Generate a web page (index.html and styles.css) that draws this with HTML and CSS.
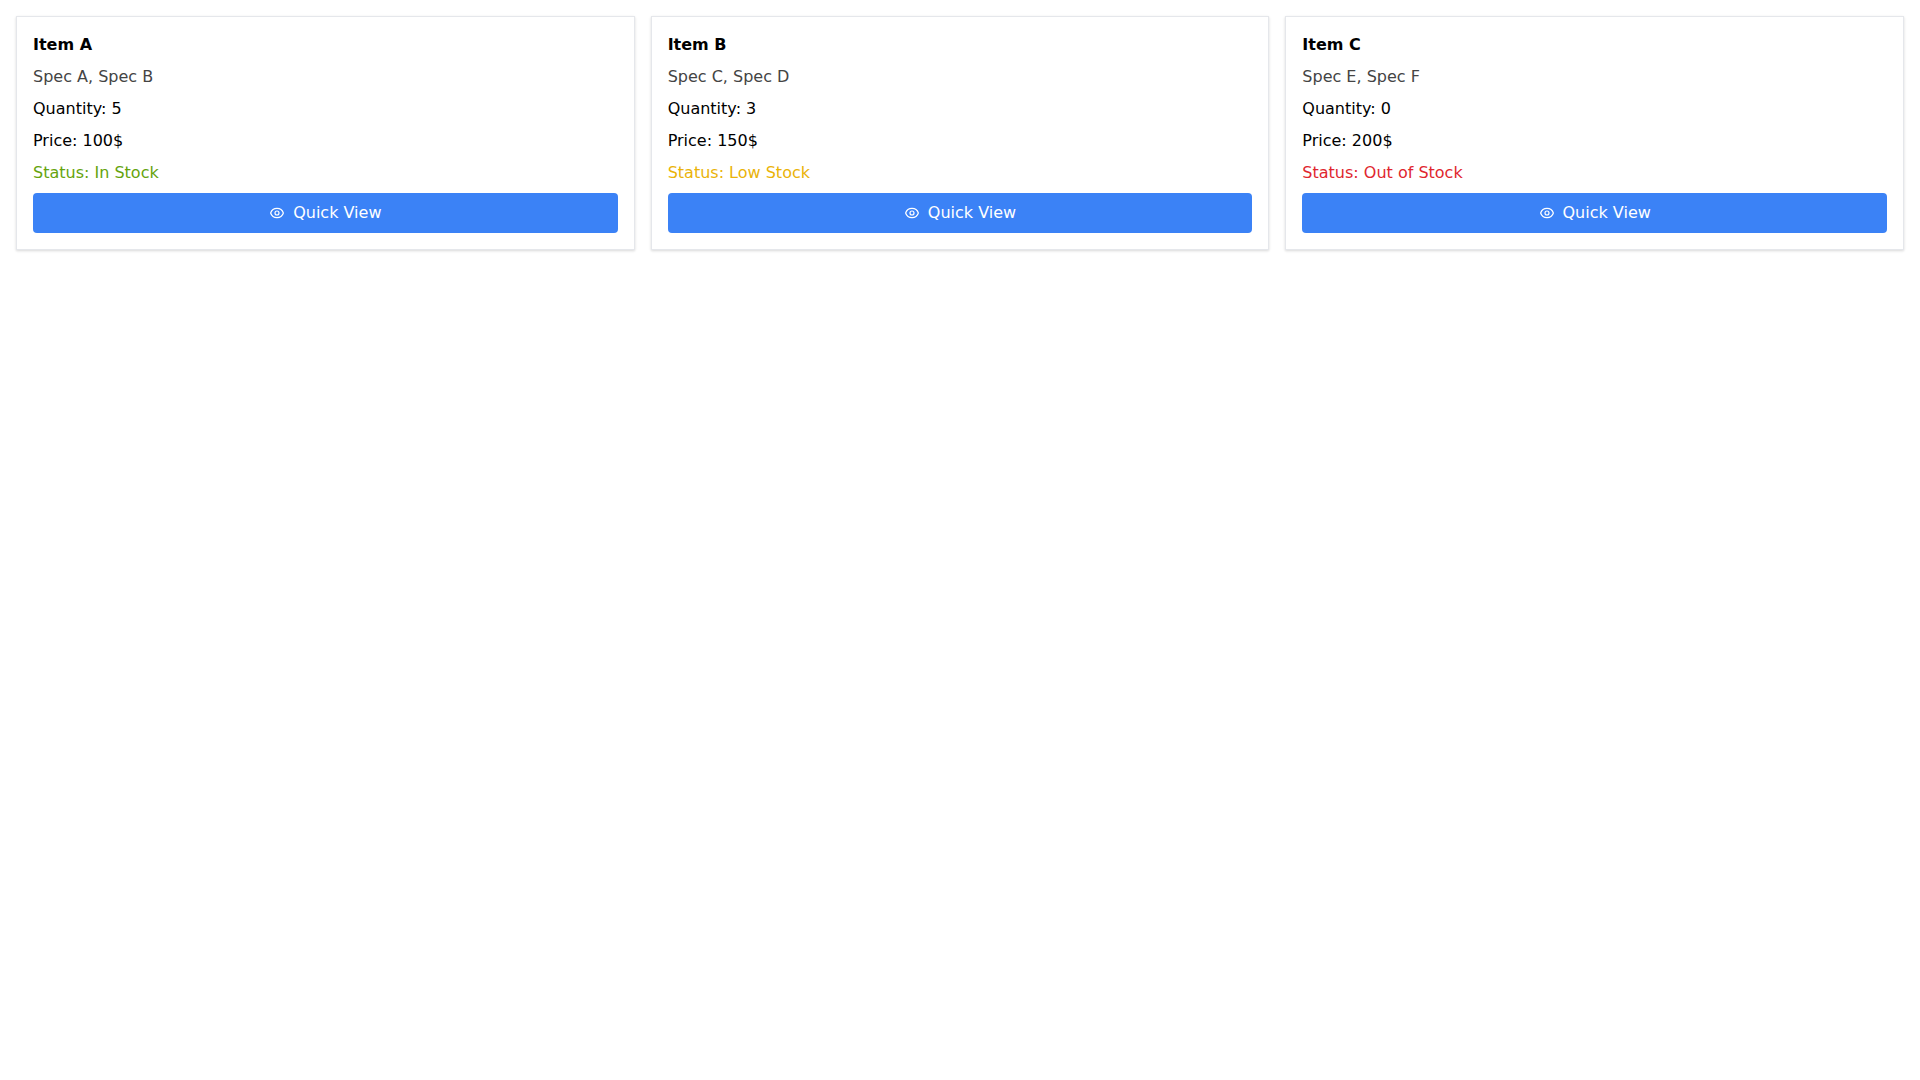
FILE: index.html
```html
<!DOCTYPE html>
<html lang="en">
<head>
    <meta charset="UTF-8">
    <meta name="viewport" content="width=device-width, initial-scale=1.0">
    <title>Items</title>
    <link rel="stylesheet" href="styles.css">
</head>
<body>
    <div class="grid">
        <div class="card">
            <div class="row name">Item A</div>
            <div class="row specs">Spec A, Spec B</div>
            <div class="row">Quantity: 5</div>
            <div class="row">Price: 100$</div>
            <div class="row status in-stock">Status: In Stock</div>
            <button class="quick-view" type="button">
                <svg class="icon" viewBox="0 0 24 24" fill="none" stroke="currentColor" stroke-width="1.8" stroke-linecap="round" stroke-linejoin="round"><path d="M15 12a3 3 0 11-6 0 3 3 0 016 0z"/><path d="M2.458 12C3.732 7.943 7.523 5 12 5c4.478 0 8.268 2.943 9.542 7-1.274 4.057-5.064 7-9.542 7-4.477 0-8.268-2.943-9.542-7z"/></svg>
                Quick View
            </button>
        </div>
        <div class="card">
            <div class="row name">Item B</div>
            <div class="row specs">Spec C, Spec D</div>
            <div class="row">Quantity: 3</div>
            <div class="row">Price: 150$</div>
            <div class="row status low-stock">Status: Low Stock</div>
            <button class="quick-view" type="button">
                <svg class="icon" viewBox="0 0 24 24" fill="none" stroke="currentColor" stroke-width="1.8" stroke-linecap="round" stroke-linejoin="round"><path d="M15 12a3 3 0 11-6 0 3 3 0 016 0z"/><path d="M2.458 12C3.732 7.943 7.523 5 12 5c4.478 0 8.268 2.943 9.542 7-1.274 4.057-5.064 7-9.542 7-4.477 0-8.268-2.943-9.542-7z"/></svg>
                Quick View
            </button>
        </div>
        <div class="card">
            <div class="row name">Item C</div>
            <div class="row specs">Spec E, Spec F</div>
            <div class="row">Quantity: 0</div>
            <div class="row">Price: 200$</div>
            <div class="row status out-of-stock">Status: Out of Stock</div>
            <button class="quick-view" type="button">
                <svg class="icon" viewBox="0 0 24 24" fill="none" stroke="currentColor" stroke-width="1.8" stroke-linecap="round" stroke-linejoin="round"><path d="M15 12a3 3 0 11-6 0 3 3 0 016 0z"/><path d="M2.458 12C3.732 7.943 7.523 5 12 5c4.478 0 8.268 2.943 9.542 7-1.274 4.057-5.064 7-9.542 7-4.477 0-8.268-2.943-9.542-7z"/></svg>
                Quick View
            </button>
        </div>
    </div>
</body>
</html>
```
FILE: styles.css
```css
body {
    font-family: "DejaVu Sans", sans-serif;
    font-size: 16px;
    line-height: 24px;
    background: #fff;
    color: #000;
    margin: 0;
}
.grid {
    display: grid;
    grid-template-columns: repeat(3, 1fr);
    gap: 16px;
    padding: 16px;
}
.card {
    background: #fff;
    border: 1px solid #e5e7eb;
    padding: 16px;
    box-shadow: 0 1px 3px rgba(0, 0, 0, 0.1), 0 1px 2px rgba(0, 0, 0, 0.06);
}
.row {
    margin-bottom: 8px;
}
.name {
    font-weight: bold;
}
.specs {
    color: #444;
}
.in-stock {
    color: #65a30d;
}
.low-stock {
    color: #eab308;
}
.out-of-stock {
    color: #e0262e;
}
.quick-view {
    display: flex;
    align-items: center;
    justify-content: center;
    width: 100%;
    height: 40px;
    padding: 8px 16px;
    border: none;
    border-radius: 4px;
    background: #3b82f6;
    color: #fff;
    font: inherit;
    cursor: pointer;
}
.icon {
    width: 16px;
    height: 16px;
    margin-right: 8px;
}
```
